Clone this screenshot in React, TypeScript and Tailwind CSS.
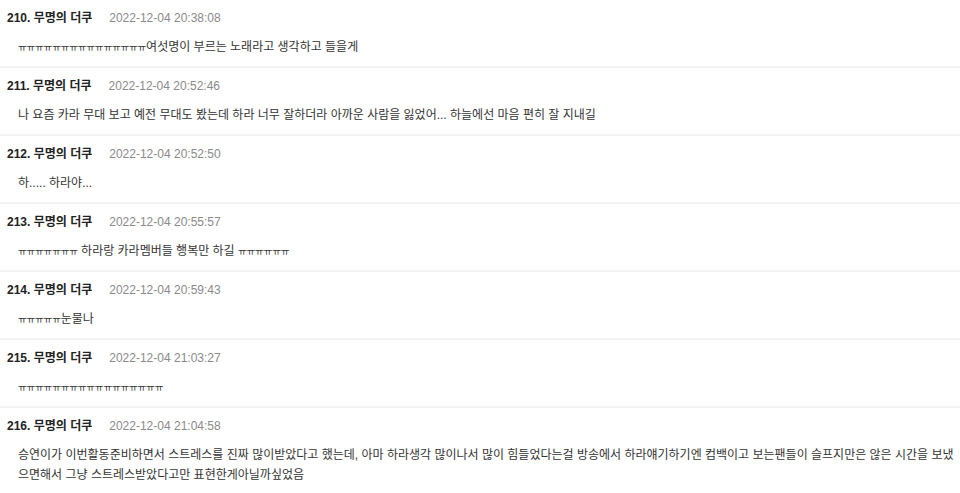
import React from "react";

type Item = { no: number; date: string; lines: string[] };

const items: Item[] = [
  { no: 210, date: "2022-12-04 20:38:08", lines: ["ㅠㅠㅠㅠㅠㅠㅠㅠㅠㅠㅠㅠㅠㅠㅠ여섯명이 부르는 노래라고 생각하고 들을게"] },
  { no: 211, date: "2022-12-04 20:52:46", lines: ["나 요즘 카라 무대 보고 예전 무대도 봤는데 하라 너무 잘하더라 아까운 사람을 잃었어... 하늘에선 마음 편히 잘 지내길"] },
  { no: 212, date: "2022-12-04 20:52:50", lines: ["하..... 하라야..."] },
  { no: 213, date: "2022-12-04 20:55:57", lines: ["ㅠㅠㅠㅠㅠㅠㅠ 하라랑 카라멤버들 행복만 하길 ㅠㅠㅠㅠㅠㅠ"] },
  { no: 214, date: "2022-12-04 20:59:43", lines: ["ㅠㅠㅠㅠㅠ눈물나"] },
  { no: 215, date: "2022-12-04 21:03:27", lines: ["ㅠㅠㅠㅠㅠㅠㅠㅠㅠㅠㅠㅠㅠㅠㅠㅠㅠ"] },
  {
    no: 216,
    date: "2022-12-04 21:04:58",
    lines: [
      "승연이가 이번활동준비하면서 스트레스를 진짜 많이받았다고 했는데, 아마 하라생각 많이나서 많이 힘들었다는걸 방송에서 하라얘기하기엔 컴백이고 보는팬들이 슬프지만은 않은 시간을 보냈",
      "으면해서 그냥 스트레스받았다고만 표현한게아닐까싶었음",
    ],
  },
];

function Line({ text }: { text: string }) {
  const parts = text.split(/(ㅠ+)/);
  return (
    <div className="h-[20px]">
      {parts.map((p, i) =>
        p.startsWith("ㅠ") ? (
          <span key={i} className="text-[9.5px] leading-none tracking-[-0.2px]">
            {p}
          </span>
        ) : (
          <span key={i}>{p}</span>
        )
      )}
    </div>
  );
}

export default function App() {
  return (
    <div
      className="w-[960px] h-[493px] overflow-hidden bg-white"
      style={{ fontFamily: '"Liberation Sans", "Noto Sans CJK KR", sans-serif' }}
    >
      {items.map((it) => (
        <div key={it.no} className="pt-[9px] pb-[9px] px-[7px] border-b-2 border-[#f3f3f3]">
          <div className="flex items-center h-[18px] leading-[18px] text-[12px]">
            <span className="font-bold text-[#222]">{it.no}. 무명의 더쿠</span>
            <span className="ml-[17px] text-[#8a8a8a]">{it.date}</span>
          </div>
          <div className="mt-[10px] pl-[11px] text-[12px] leading-[20px] text-[#333] whitespace-nowrap">
            {it.lines.map((l, i) => (
              <Line key={i} text={l} />
            ))}
          </div>
        </div>
      ))}
    </div>
  );
}
